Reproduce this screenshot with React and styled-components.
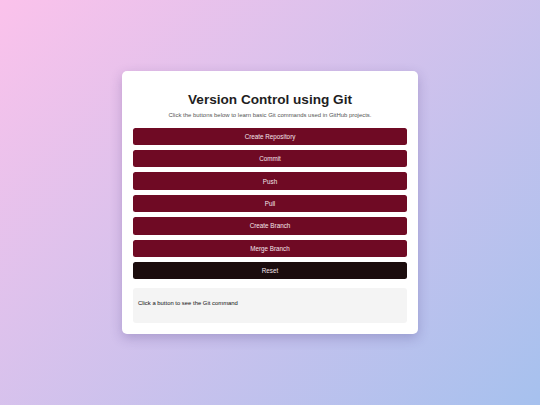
import { useState } from "react";
import styled, { createGlobalStyle } from "styled-components";

const GlobalStyle = createGlobalStyle`
  html, body {
    margin: 0;
    padding: 0;
  }
  body {
    font-family: "Liberation Sans", Arial, sans-serif;
  }
`;

const Page = styled.div`
  width: 540px;
  height: 405px;
  display: flex;
  align-items: center;
  justify-content: center;
  background: linear-gradient(135deg, #fbc2eb 0%, #a6c1ee 100%);
`;

const Card = styled.div`
  width: 296px;
  box-sizing: border-box;
  padding: 11px;
  background: #ffffff;
  border-radius: 5px;
  box-shadow: 0 4px 12px rgba(60, 40, 110, 0.25);
  text-align: center;
`;

const Title = styled.h1`
  margin: 10.5px 0 0;
  font-size: 13.6px;
  line-height: 15.6px;
  font-weight: 700;
  color: #1e1e1e;
`;

const Subtitle = styled.p`
  margin: 4px 0 9px;
  font-size: 5.95px;
  line-height: 7px;
  color: #555555;
`;

const ButtonList = styled.div`
  display: flex;
  flex-direction: column;
  gap: 5px;
`;

const CmdButton = styled.button`
  height: 17.4px;
  border: none;
  border-radius: 2.5px;
  background: ${(props) => (props.$dark ? "#1b0c0d" : "#6f0a24")};
  color: #f3e4ea;
  font-family: inherit;
  font-size: 6.3px;
  cursor: pointer;
  padding: 0;
`;

const Output = styled.div`
  margin-top: 9px;
  height: 35px;
  box-sizing: border-box;
  padding: 0 5px 5px;
  display: flex;
  align-items: center;
  background: #f4f4f4;
  border-radius: 3px;
  font-size: 5.9px;
  color: #111111;
  text-align: left;
`;

const commands = [
  { label: "Create Repository", cmd: "git init" },
  { label: "Commit", cmd: 'git commit -m "message"' },
  { label: "Push", cmd: "git push origin main" },
  { label: "Pull", cmd: "git pull origin main" },
  { label: "Create Branch", cmd: "git branch new-branch" },
  { label: "Merge Branch", cmd: "git merge new-branch" },
];

const defaultText = "Click a button to see the Git command";

function App() {
  let [text, setText] = useState(defaultText);

  return (
    <Page>
      <GlobalStyle />
      <Card>
        <Title>Version Control using Git</Title>
        <Subtitle>Click the buttons below to learn basic Git commands used in GitHub projects.</Subtitle>
        <ButtonList>
          {commands.map((c) => (
            <CmdButton key={c.label} onClick={() => setText(c.cmd)}>
              {c.label}
            </CmdButton>
          ))}
          <CmdButton $dark onClick={() => setText(defaultText)}>Reset</CmdButton>
        </ButtonList>
        <Output>{text}</Output>
      </Card>
    </Page>
  );
}

export default App;
